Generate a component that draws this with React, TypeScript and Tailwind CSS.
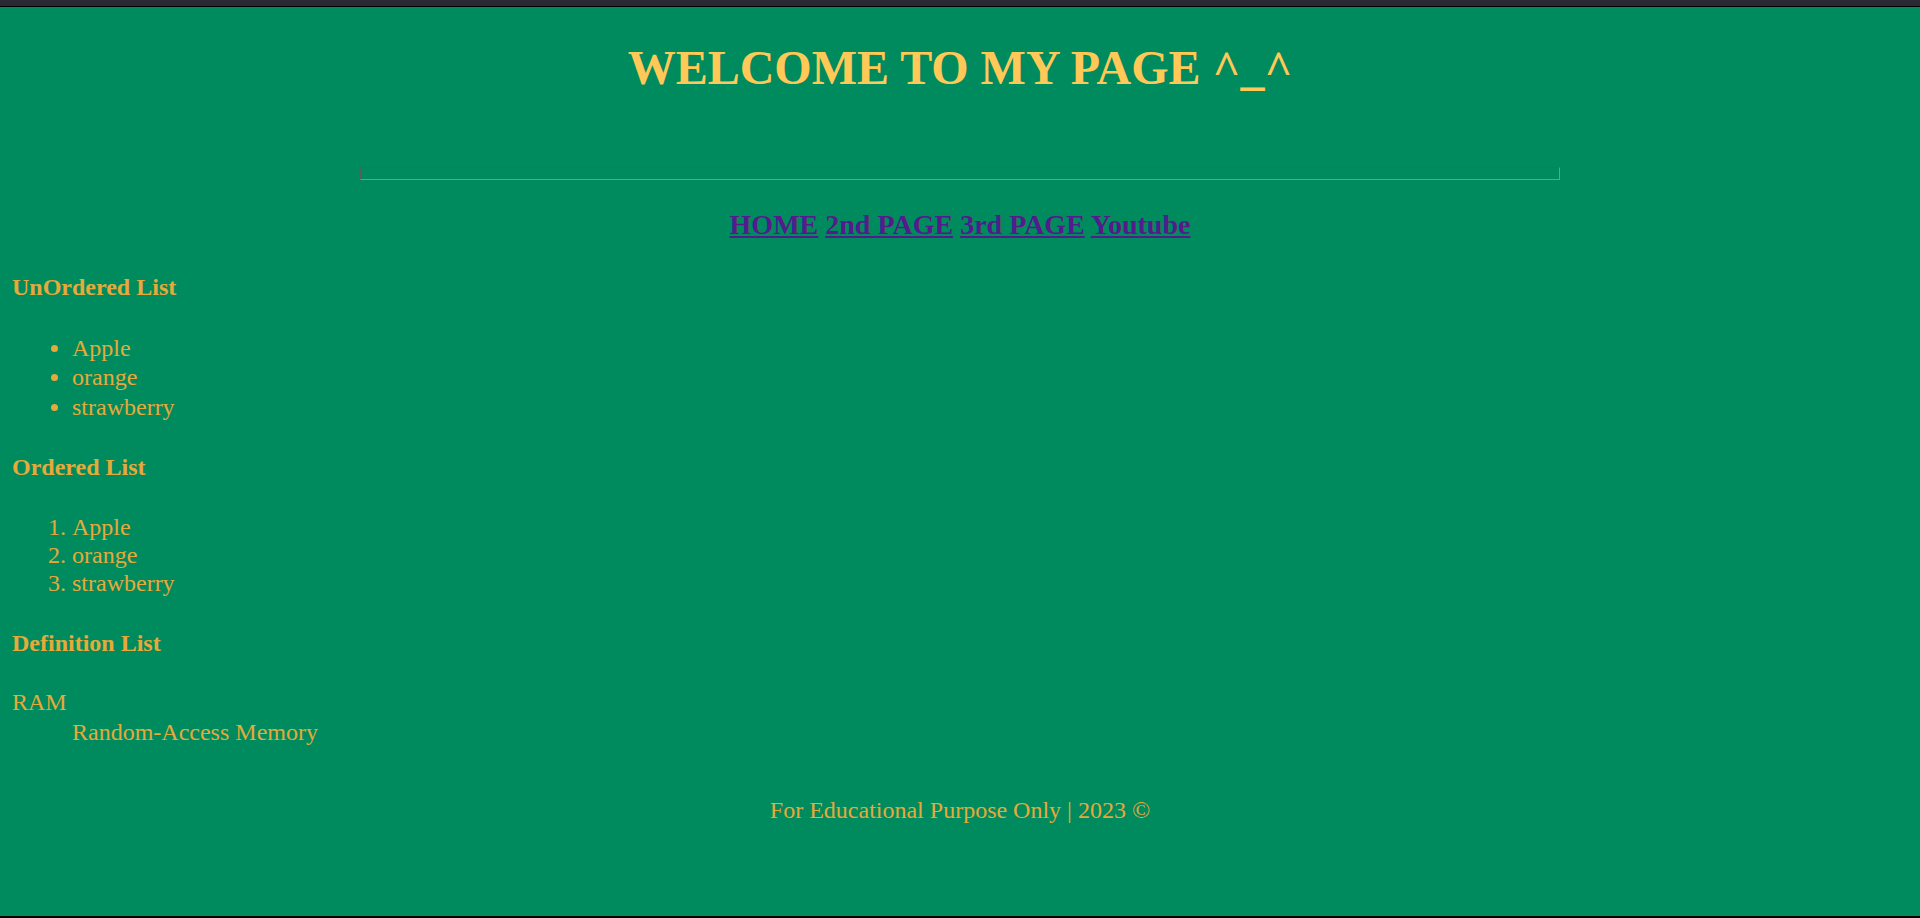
import React from "react";

export default function App() {
  const serif = { fontFamily: '"Liberation Serif", "Times New Roman", serif' };
  return (
    <div className="w-full h-[918px] flex flex-col bg-black overflow-hidden" style={serif}>
      <div className="h-[6px] bg-[#2a2833] shrink-0" />
      <div className="h-[1px] bg-black shrink-0" />
      <div className="h-[909px] shrink-0 bg-[#008b5e] px-[12px] flex flex-col text-[#e6a93a]">
        <h1 className="mt-[33px] text-center text-[48px] leading-[55px] font-bold text-[#ffc857]">
          WELCOME TO MY PAGE ^_^
        </h1>
        <div className="mt-[72px] flex justify-center">
          <div className="w-[1200px] h-[13px] border border-t-[#5a5a5a] border-l-[#5a5a5a] border-b-[#8c8c8c] border-r-[#8c8c8c]" />
        </div>
        <div className="mt-[29px] text-center text-[28px] leading-[32px] font-bold">
          <a href="#" className="underline text-[#551a8b]">HOME</a>{" "}
          <a href="#" className="underline text-[#551a8b]">2nd PAGE</a>{" "}
          <a href="#" className="underline text-[#551a8b]">3rd PAGE</a>{" "}
          <a href="#" className="underline text-[#551a8b]">Youtube</a>
        </div>
        <h4 className="mt-[32px] text-[24px] leading-[28px] font-bold">UnOrdered List</h4>
        <ul className="mt-[33px] pl-[60px] list-disc text-[24px] leading-[29.3px]">
          <li>Apple</li>
          <li>orange</li>
          <li>strawberry</li>
        </ul>
        <h4 className="mt-[31px] text-[24px] leading-[28px] font-bold">Ordered List</h4>
        <ol className="mt-[32px] pl-[60px] list-decimal text-[24px] leading-[28px]">
          <li>Apple</li>
          <li>orange</li>
          <li>strawberry</li>
        </ol>
        <h4 className="mt-[32px] text-[24px] leading-[28px] font-bold">Definition List</h4>
        <dl className="mt-[32px] text-[24px] leading-[27.6px]">
          <dt>RAM</dt>
          <dd className="ml-[60px] leading-[33px]">Random-Access Memory</dd>
        </dl>
        <p className="mt-[48px] text-center text-[24px] leading-[27.6px]">
          For Educational Purpose Only | 2023 ©
        </p>
      </div>
      <div className="h-[2px] bg-black shrink-0" />
    </div>
  );
}
